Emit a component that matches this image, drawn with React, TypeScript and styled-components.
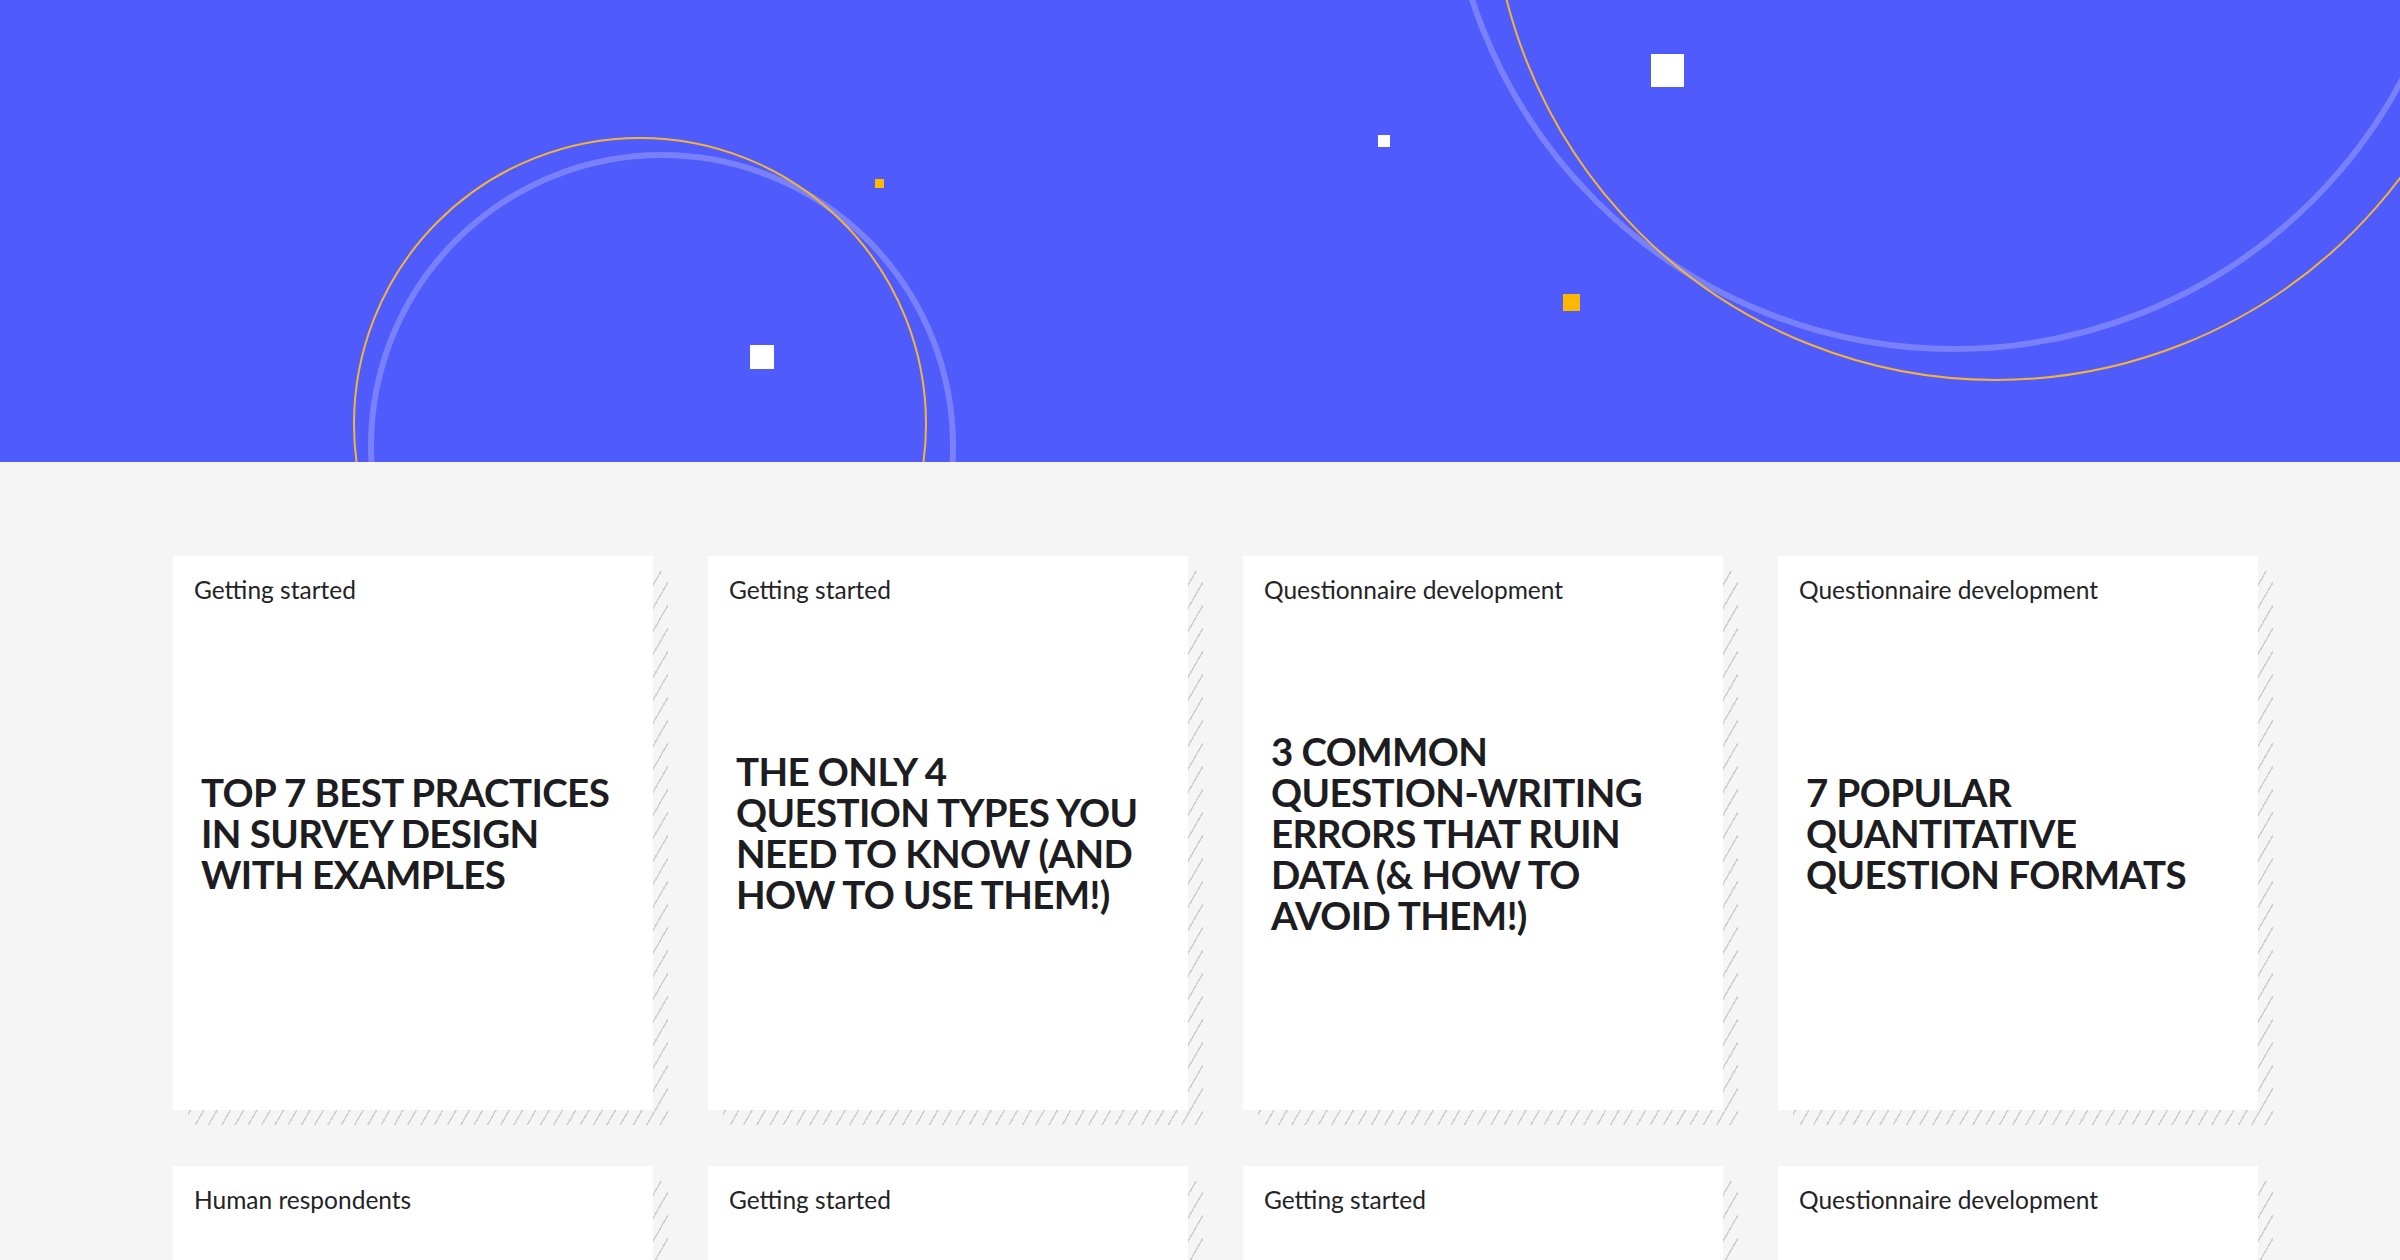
import React from "react";
import styled, { createGlobalStyle } from "styled-components";

const GlobalStyle = createGlobalStyle`
  html, body {
    margin: 0;
    padding: 0;
    background: #f5f5f5;
  }
  body {
    overflow-x: hidden;
    font-family: Lato, "Liberation Sans", sans-serif;
  }
`;

const Page = styled.div`
  width: 2400px;
  min-height: 1260px;
  background: #f5f5f5;
`;

const Hero = styled.header`
  height: 462px;
  background: #4f5bfa;
  overflow: hidden;
`;

const HeroArt = styled.svg`
  display: block;
  width: 2400px;
  height: 462px;
`;

const Listing = styled.main`
  padding: 94px 0 0 173px;
  display: grid;
  grid-template-columns: repeat(4, 495px);
  column-gap: 40px;
  row-gap: 41px;
`;

const CardFrame = styled.article`
  width: 495px;
  height: 569px;
  padding: 0 15px 15px 0;
  box-sizing: border-box;
  background:
    linear-gradient(#f5f5f5, #f5f5f5) right top / 15px 15px no-repeat,
    linear-gradient(#f5f5f5, #f5f5f5) left bottom / 15px 15px no-repeat,
    repeating-linear-gradient(
      120deg,
      transparent 0 4px,
      #cfcfcf 4px 5.5px,
      transparent 5.5px 11.5px
    );
`;

const Card = styled.div`
  width: 480px;
  height: 554px;
  background: #ffffff;
  display: grid;
  grid-template-rows: 1fr auto 1fr;
`;

const Category = styled.span`
  align-self: start;
  padding: 19px 0 0 21px;
  font-family: Lato, "Liberation Sans", sans-serif;
  font-weight: 400;
  font-size: 24.5px;
  line-height: 30px;
  color: #232326;
`;

const Title = styled.h2`
  margin: 0;
  padding: 0 28px;
  font-family: Lato, "Liberation Sans", sans-serif;
  font-weight: 700;
  font-size: 38.5px;
  line-height: 41px;
  letter-spacing: -0.6px;
  color: #1d1d21;
  white-space: nowrap;
`;

type Post = { category: string; lines: string[] };

const posts: Post[] = [
  {
    category: "Getting started",
    lines: ["TOP 7 BEST PRACTICES", "IN SURVEY DESIGN", "WITH EXAMPLES"],
  },
  {
    category: "Getting started",
    lines: ["THE ONLY 4", "QUESTION TYPES YOU", "NEED TO KNOW (AND", "HOW TO USE THEM!)"],
  },
  {
    category: "Questionnaire development",
    lines: ["3 COMMON", "QUESTION-WRITING", "ERRORS THAT RUIN", "DATA (& HOW TO", "AVOID THEM!)"],
  },
  {
    category: "Questionnaire development",
    lines: ["7 POPULAR", "QUANTITATIVE", "QUESTION FORMATS"],
  },
  { category: "Human respondents", lines: [] },
  { category: "Getting started", lines: [] },
  { category: "Getting started", lines: [] },
  { category: "Questionnaire development", lines: [] },
];

export default function App() {
  return (
    <Page>
      <GlobalStyle />
      <Hero>
        <HeroArt viewBox="0 0 2400 462" xmlns="http://www.w3.org/2000/svg">
          <circle cx="662" cy="446" r="291" fill="none" stroke="#7880fb" strokeWidth="6" />
          <circle cx="640" cy="424" r="286" fill="none" stroke="#f4b43a" strokeWidth="2" />
          <circle cx="1954" cy="-158" r="507" fill="none" stroke="#7880fb" strokeWidth="6" />
          <circle cx="1996" cy="-125" r="505" fill="none" stroke="#f4b43a" strokeWidth="2" />
          <rect x="875" y="179" width="9" height="9" fill="#ffb800" />
          <rect x="750" y="345" width="24" height="24" fill="#ffffff" />
          <rect x="1651" y="54" width="33" height="33" fill="#ffffff" />
          <rect x="1378" y="135" width="12" height="12" fill="#ffffff" />
          <rect x="1563" y="294" width="17" height="17" fill="#ffb800" />
        </HeroArt>
      </Hero>
      <Listing>
        {posts.map((p, i) => (
          <CardFrame key={i}>
            <Card>
              <Category>{p.category}</Category>
              <Title>
                {p.lines.map((l, j) => (
                  <React.Fragment key={j}>
                    {l}
                    {j < p.lines.length - 1 && <br />}
                  </React.Fragment>
                ))}
              </Title>
            </Card>
          </CardFrame>
        ))}
      </Listing>
    </Page>
  );
}
